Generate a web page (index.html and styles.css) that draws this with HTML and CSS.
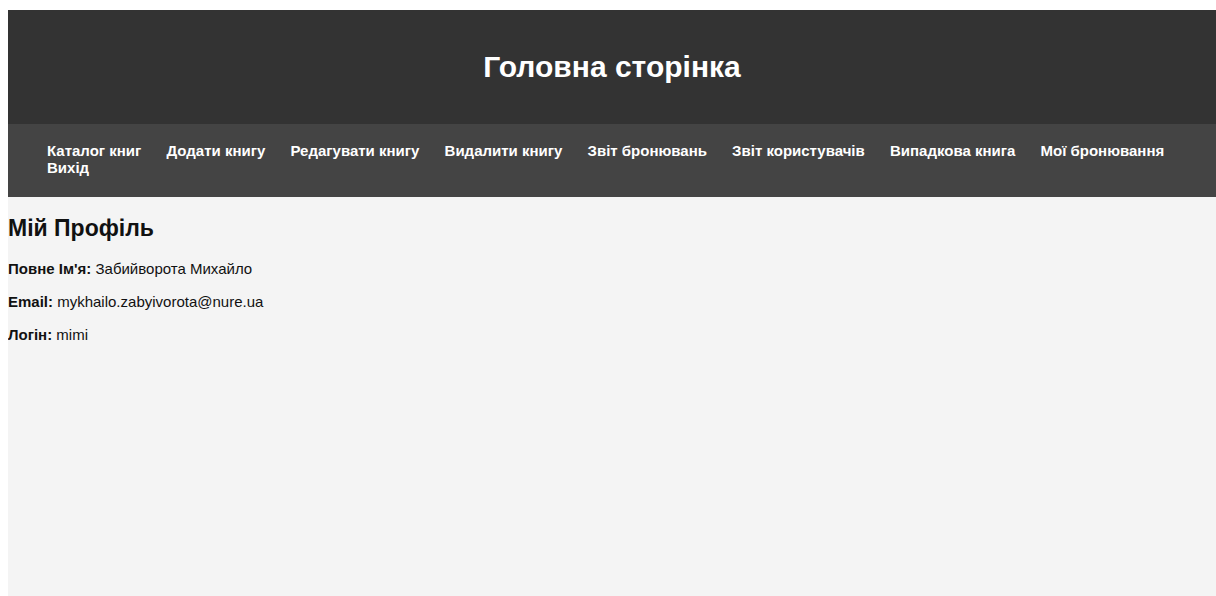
FILE: index.html
```html
<!DOCTYPE html>
<html lang="uk">
<head>
<meta charset="utf-8">
<title>Головна сторінка</title>
<link rel="stylesheet" href="styles.css">
</head>
<body>
<header class="site-header">
  <h1 class="site-title">Головна сторінка</h1>
</header>
<nav class="site-nav">
  <ul class="nav-list">
    <li><a href="#">Каталог книг</a></li>
    <li><a href="#">Додати книгу</a></li>
    <li><a href="#">Редагувати книгу</a></li>
    <li><a href="#">Видалити книгу</a></li>
    <li><a href="#">Звіт бронювань</a></li>
    <li><a href="#">Звіт користувачів</a></li>
    <li><a href="#">Випадкова книга</a></li>
    <li><a href="#">Мої бронювання</a></li>
    <li><a href="#">Вихід</a></li>
  </ul>
</nav>
<main class="profile">
  <h2 class="profile-title">Мій Профіль</h2>
  <p class="profile-row"><strong>Повне Ім'я:</strong> Забийворота Михайло</p>
  <p class="profile-row"><strong>Email:</strong> mykhailo.zabyivorota@nure.ua</p>
  <p class="profile-row"><strong>Логін:</strong> mimi</p>
</main>
</body>
</html>
```

FILE: styles.css
```css
html {
  background: #ffffff;
}

body {
  margin: 10px 0 0 8px;
  min-height: calc(100vh - 10px);
  background: #f4f4f4;
  font-family: "Liberation Sans", Arial, sans-serif;
  font-size: 15px;
  color: #111;
}

.site-header {
  background: #333333;
  color: #fff;
  height: 114px;
  display: flex;
  align-items: center;
  justify-content: center;
}

.site-title {
  margin: 0;
  font-size: 30px;
  font-weight: bold;
}

.site-nav {
  background: #444444;
  padding: 18px 0 21px;
}

.nav-list {
  list-style: none;
  margin: 0;
  padding: 0 20px 0 39px;
  line-height: 17px;
}

.nav-list li {
  display: inline;
  white-space: nowrap;
  margin-right: 21px;
}

.nav-list a {
  color: #fff;
  font-weight: bold;
  text-decoration: none;
}

.profile-title {
  font-size: 23px;
  margin: 18px 0 18px;
}

.profile-row {
  line-height: 17px;
  margin: 0 0 16px;
}
```
